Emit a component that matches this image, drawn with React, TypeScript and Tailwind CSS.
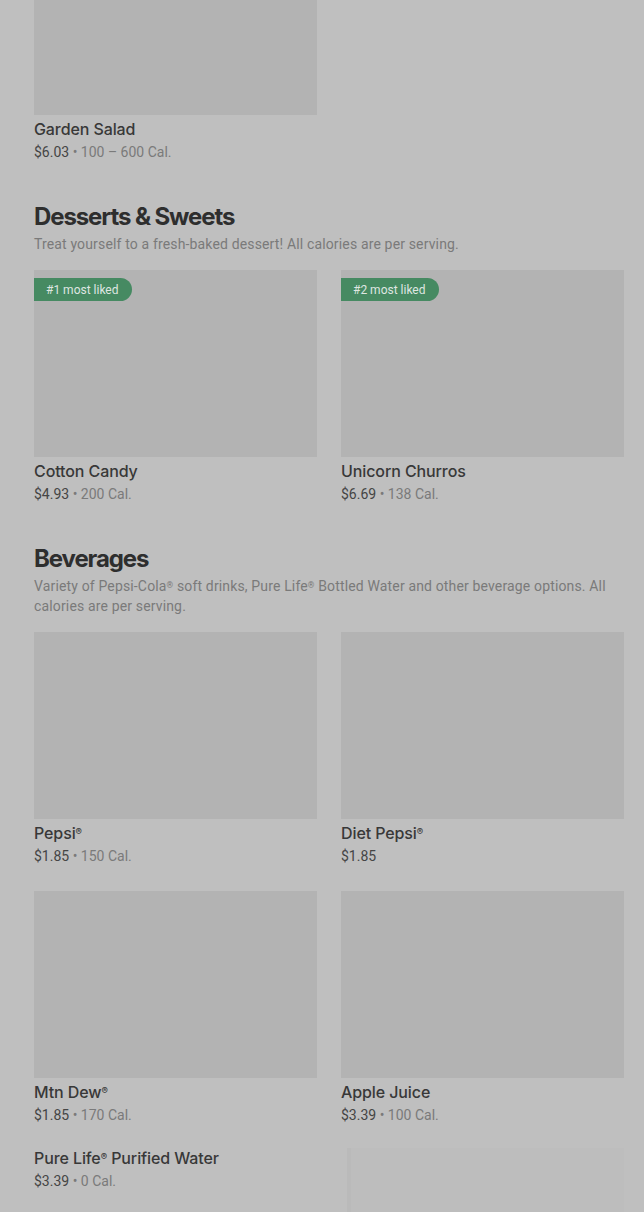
import React from "react";

const R = () => <span className="relative -top-[0.4em] text-[0.6em] leading-none">®</span>;

type Item = { name: React.ReactNode; price: string; cal?: string; badge?: string };

function Card({ item }: { item: Item }) {
  return (
    <div className="flex flex-col">
      <div className="relative h-[187px] bg-[#b3b3b3]">
        {item.badge && (
          <div className="absolute left-0 top-[8px] h-[23px] flex items-center pl-[12px] pr-[13px] rounded-r-full bg-[#468a62] text-[12px] text-[#dfe6e1]">
            {item.badge}
          </div>
        )}
      </div>
      <div className="mt-[2px] text-[16px] leading-[24px] font-medium text-[#383838] font-['Inter',sans-serif] tracking-[-0.1px]">{item.name}</div>
      <div className="mt-[1px] text-[14px] leading-[20px] text-[#454545]">
        {item.price}
        {item.cal && <span className="text-[#7a7a7a]"> • {item.cal}</span>}
      </div>
    </div>
  );
}

function Section({ title, desc, children }: { title: string; desc: React.ReactNode; children: React.ReactNode }) {
  return (
    <section className="mt-[39px]">
      <h2 className="text-[24px] leading-[32px] font-bold text-[#2e2e2e] tracking-[-1.1px] font-['Inter',sans-serif]">{title}</h2>
      <p className="mt-[1px] text-[14px] leading-[20px] text-[#7a7a7a] tracking-[0.15px]">{desc}</p>
      <div className="mt-[16px] grid grid-cols-2 gap-x-[24px] gap-y-[25px]">{children}</div>
    </section>
  );
}

export default function App() {
  return (
    <div className="h-[1212px] overflow-hidden bg-[#bfbfbf] pl-[34px] pr-[20px] font-['Roboto',sans-serif]">
      <div className="-mt-[72px] grid grid-cols-2 gap-x-[24px]">
        <Card item={{ name: "Garden Salad", price: "$6.03", cal: "100 – 600 Cal." }} />
      </div>
      <Section title="Desserts & Sweets" desc="Treat yourself to a fresh-baked dessert! All calories are per serving.">
        <Card item={{ name: "Cotton Candy", price: "$4.93", cal: "200 Cal.", badge: "#1 most liked" }} />
        <Card item={{ name: "Unicorn Churros", price: "$6.69", cal: "138 Cal.", badge: "#2 most liked" }} />
      </Section>
      <Section
        title="Beverages"
        desc={
          <>
            Variety of Pepsi-Cola<R /> soft drinks, Pure Life<R /> Bottled Water and other beverage options. All calories are per serving.
          </>
        }
      >
        <Card item={{ name: <>Pepsi<R /></>, price: "$1.85", cal: "150 Cal." }} />
        <Card item={{ name: <>Diet Pepsi<R /></>, price: "$1.85" }} />
        <Card item={{ name: <>Mtn Dew<R /></>, price: "$1.85", cal: "170 Cal." }} />
        <Card item={{ name: "Apple Juice", price: "$3.39", cal: "100 Cal." }} />
        <div className="col-span-2 -mt-[4px] flex items-start">
          <div className="flex-1">
            <div className="text-[16px] leading-[24px] font-medium text-[#383838] font-['Inter',sans-serif] tracking-[-0.1px]">
              Pure Life<R /> Purified Water
            </div>
            <div className="mt-[1px] text-[14px] leading-[20px] text-[#454545]">
              $3.39<span className="text-[#7a7a7a]"> • 0 Cal.</span>
            </div>
          </div>
          <div className="mt-[2px] w-[277px] h-[120px] bg-[#bdbdbd] border-l-[4px] border-[#bababa]" />
        </div>
      </Section>
    </div>
  );
}
